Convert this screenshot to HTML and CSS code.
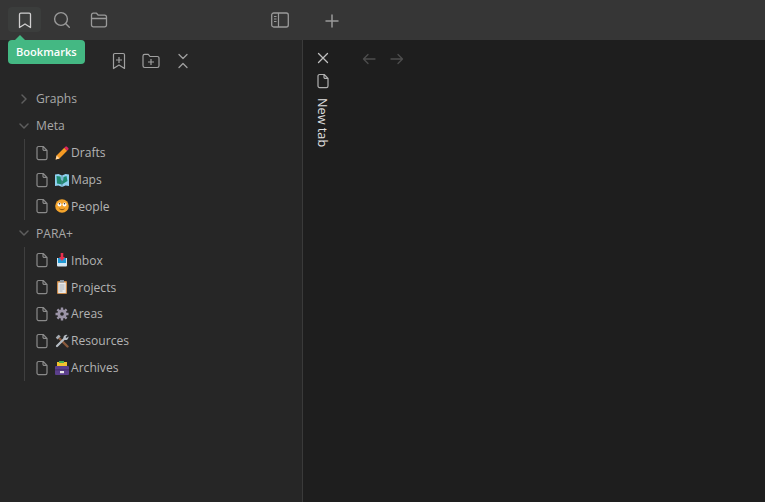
FILE: index.html
```html
<!DOCTYPE html>
<html lang="en">
<head>
<meta charset="utf-8">
<title>Bookmarks</title>
<link rel="stylesheet" href="styles.css">
</head>
<body>
<svg class="defs" width="0" height="0" aria-hidden="true">
  <symbol id="file" viewBox="0 0 14 16"><path d="M3.600 1.500h4.600L12 5.300V13a1.600 1.600 0 0 1-1.600 1.600H3.600A1.600 1.600 0 0 1 2 13V3.100a1.600 1.600 0 0 1 1.600-1.600zM8 1.600v2.600a1.200 1.200 0 0 0 1.200 1.200H12" fill="none" stroke="currentColor" stroke-width="1.200" stroke-linejoin="round"/></symbol>
  <symbol id="down" viewBox="0 0 12 12"><path d="M2 4l4 4 4-4" fill="none" stroke="currentColor" stroke-width="1.500" stroke-linecap="round" stroke-linejoin="round"/></symbol>
  <symbol id="right" viewBox="0 0 12 12"><path d="M4 2l4 4-4 4" fill="none" stroke="currentColor" stroke-width="1.500" stroke-linecap="round" stroke-linejoin="round"/></symbol>
</svg>
<div class="app">
  <header class="titlebar">
    <div class="title-left">
      <div class="tb-btn active"><svg width="18" height="18" viewBox="0 0 18 18"><path d="M3.500 3.500A1.300 1.300 0 0 1 4.800 2.200h8.400a1.300 1.300 0 0 1 1.300 1.300v13L9 13l-5.500 3.500z" fill="none" stroke="currentColor" stroke-width="1.300" stroke-linejoin="round"/></svg></div>
      <div class="tb-btn"><svg width="18" height="18" viewBox="0 0 18 18"><circle cx="8" cy="8" r="6.400" fill="none" stroke="currentColor" stroke-width="1.400"/><path d="M12.800 12.800l3.500 3.500" stroke="currentColor" stroke-width="1.400" stroke-linecap="round"/></svg></div>
      <div class="tb-btn"><svg width="18" height="18" viewBox="0 0 18 18"><path d="M1.500 4A1.800 1.800 0 0 1 3.300 2.200h3.200l1.800 2h6.400a1.800 1.800 0 0 1 1.800 1.800v8a1.800 1.800 0 0 1-1.800 1.800H3.300A1.800 1.800 0 0 1 1.500 14zM1.500 7.500h15" fill="none" stroke="currentColor" stroke-width="1.300" stroke-linejoin="round"/></svg></div>
      <div class="tb-btn layout"><svg width="18" height="16" viewBox="0 0 18 16"><rect x="0.700" y="1" width="16.600" height="14" rx="2" fill="none" stroke="currentColor" stroke-width="1.300"/><path d="M7.500 1v14M3 4.500h2.500M3 7h2.500M3 9.500h2.500" stroke="currentColor" stroke-width="1.200" fill="none"/></svg></div>
    </div>
    <div class="title-right">
      <svg width="14" height="14" viewBox="0 0 14 14"><path d="M7 1v12M1 7h12" stroke="currentColor" stroke-width="1.500" stroke-linecap="round"/></svg>
    </div>
  </header>
  <div class="tooltip">Bookmarks</div>
  <div class="content">
    <aside class="sidebar">
      <div class="sidebar-tools">
        <div class="tool"><svg width="16" height="18" viewBox="0 0 16 18"><path d="M2.500 2.800A1.300 1.300 0 0 1 3.800 1.500h8.400a1.300 1.300 0 0 1 1.300 1.300v13.700L8 13l-5.500 3.500zM8 5v6M5 8h6" fill="none" stroke="currentColor" stroke-width="1.200" stroke-linejoin="round"/></svg></div>
        <div class="tool"><svg width="18" height="16" viewBox="0 0 18 16"><path d="M1 3a1.700 1.700 0 0 1 1.700-1.700h3.600L8 3.500h7.300A1.700 1.700 0 0 1 17 5.200v7.600a1.700 1.700 0 0 1-1.700 1.700H2.700A1.700 1.700 0 0 1 1 12.800zM9 6v6M6 9h6" fill="none" stroke="currentColor" stroke-width="1.200" stroke-linejoin="round"/></svg></div>
        <div class="tool"><svg width="12" height="16" viewBox="0 0 12 16"><path d="M2 1.500L6 5.500l4-4M2 14.500L6 10.500l4 4" fill="none" stroke="currentColor" stroke-width="1.300" stroke-linecap="round" stroke-linejoin="round"/></svg></div>
      </div>
      <nav class="tree">
        <div class="row group"><svg class="chev" width="12" height="12"><use href="#right"/></svg><span>Graphs</span></div>
        <div class="row group"><svg class="chev" width="12" height="12"><use href="#down"/></svg><span>Meta</span></div>
        <div class="children">
          <div class="row item"><svg class="file" width="14" height="16"><use href="#file"/></svg><svg class="emoji" width="14" height="14" viewBox="0 0 14 14"><path d="M.6 13.400l1-3.900L9.300 1.800l2.900 2.900-7.700 7.700z" fill="#f59a23"/><path d="M9.300 1.800l1.100-1.100a1.100 1.100 0 0 1 1.500 0l1.400 1.400a1.100 1.100 0 0 1 0 1.500l-1.100 1.100z" fill="#e0245e"/><path d="M.6 13.400l1-3.900 2.900 2.900z" fill="#ffd9a8"/></svg><span>Drafts</span></div>
          <div class="row item"><svg class="file" width="14" height="16"><use href="#file"/></svg><svg class="emoji" width="14" height="14" viewBox="0 0 14 14"><path d="M0 1.500l3.500-.5L7 2.500 10.500 1l3.500.5V13l-3.500-.5L7 14l-3.500-1.500L0 13z" fill="#8fd0f0"/><path d="M1.500 3l4 .5.500 3.500 2 1 .500-4 3-1 1 5-2.500 1.500-3 2-5-1z" fill="#1f8a70"/><path d="M7 2.500V14" stroke="#5c7f96" stroke-width=".7"/></svg><span>Maps</span></div>
          <div class="row item"><svg class="file" width="14" height="16"><use href="#file"/></svg><svg class="emoji" width="14" height="14" viewBox="0 0 14 14"><circle cx="7" cy="7" r="6.800" fill="#f4a42c"/><circle cx="4.500" cy="5.500" r="2" fill="#fff"/><circle cx="9.500" cy="5.500" r="2" fill="#fff"/><circle cx="4.500" cy="4.800" r=".8" fill="#333"/><circle cx="9.500" cy="4.800" r=".8" fill="#333"/><path d="M4.500 9.800c1.500 1.200 3.500 1.200 5 0" stroke="#7a4a10" stroke-width=".9" fill="none"/></svg><span>People</span></div>
        </div>
        <div class="row group"><svg class="chev" width="12" height="12"><use href="#down"/></svg><span>PARA+</span></div>
        <div class="children">
          <div class="row item"><svg class="file" width="14" height="16"><use href="#file"/></svg><svg class="emoji" width="14" height="14" viewBox="0 0 14 14"><path d="M2 5h10v7.500a1 1 0 0 1-1 1H3a1 1 0 0 1-1-1z" fill="#d4e6f3"/><path d="M3 5h8v5H3z" fill="#1f9ad6"/><path d="M5.700 0h2.600v4H10L7 8 4 4h1.700z" fill="#e8304f"/></svg><span>Inbox</span></div>
          <div class="row item"><svg class="file" width="14" height="16"><use href="#file"/></svg><svg class="emoji" width="14" height="14" viewBox="0 0 14 14"><rect x="2" y="1" width="10" height="13" rx="1" fill="#c98a4a"/><rect x="3.200" y="2.500" width="7.600" height="10.500" fill="#e9e9e9"/><rect x="5" y="0" width="4" height="2.500" fill="#8f98a0"/><path d="M4.500 5h5M4.500 7h5M4.500 9h5M4.500 11h3" stroke="#9aa5ad" stroke-width=".8"/></svg><span>Projects</span></div>
          <div class="row item"><svg class="file" width="14" height="16"><use href="#file"/></svg><svg class="emoji" width="14" height="14" viewBox="0 0 14 14"><path d="M7 .5v13M.5 7h13M2.400 2.400l9.200 9.200M11.600 2.400l-9.200 9.200" stroke="#9a93a6" stroke-width="2.400"/><circle cx="7" cy="7" r="3.300" fill="none" stroke="#9a93a6" stroke-width="2.600"/><circle cx="7" cy="7" r="1.800" fill="#262626"/></svg><span>Areas</span></div>
          <div class="row item"><svg class="file" width="14" height="16"><use href="#file"/></svg><svg class="emoji" width="14" height="14" viewBox="0 0 14 14"><path d="M3.500 3.500l9 9" stroke="#8a5a3c" stroke-width="2.400" stroke-linecap="round"/><path d="M.8 3.500L3.500.8l2.200 1.400-3.300 3.300z" fill="#a4abb3"/><path d="M2 12l7.300-7.300" stroke="#b5bcc4" stroke-width="2.200" stroke-linecap="round"/><path d="M8.500 4.500a3 3 0 0 1 4-3.500l-2 2 1 1 2-1.500a3 3 0 0 1-3.500 3.500z" fill="#b5bcc4"/></svg><span>Resources</span></div>
          <div class="row item"><svg class="file" width="14" height="16"><use href="#file"/></svg><svg class="emoji" width="14" height="14" viewBox="0 0 14 14"><rect x="2" y="1" width="10" height="5" fill="#f3c12e"/><rect x="4" y="0" width="5" height="2" fill="#4caf50"/><rect x="0" y="5" width="14" height="9" rx="1" fill="#5b3f8c"/><rect x="0" y="8.500" width="14" height=".8" fill="#3c2a60"/><rect x="5" y="10" width="4" height="2.200" fill="#e6e6e6"/></svg><span>Archives</span></div>
        </div>
      </nav>
    </aside>
    <main class="main">
      <div class="tabs">
        <svg class="close" width="12" height="12" viewBox="0 0 12 12"><path d="M1.500 1.500l9 9M10.500 1.500l-9 9" stroke="currentColor" stroke-width="1.300" stroke-linecap="round"/></svg>
        <svg class="tab-file" width="14" height="16"><use href="#file"/></svg>
        <span class="tab-title">New tab</span>
      </div>
      <div class="nav-arrows">
        <svg width="14" height="12" viewBox="0 0 14 12"><path d="M13 6H1.500M6 1.500L1.500 6 6 10.500" fill="none" stroke="currentColor" stroke-width="1.300" stroke-linecap="round" stroke-linejoin="round"/></svg>
        <svg width="14" height="12" viewBox="0 0 14 12"><path d="M1 6h11.500M8 1.500L12.500 6 8 10.500" fill="none" stroke="currentColor" stroke-width="1.300" stroke-linecap="round" stroke-linejoin="round"/></svg>
      </div>
    </main>
  </div>
</div>
</body>
</html>
```
FILE: styles.css
```css
* { box-sizing: border-box; }
html, body { margin: 0; height: 100%; overflow: hidden; }
body { background: #1e1e1e; font-family: "Open Sans", "Noto Sans", sans-serif; font-size: 12.100px; color: #b3b3b3; }
.defs { position: absolute; }
.app { position: relative; display: flex; flex-direction: column; height: 502px; }

.titlebar { display: flex; height: 40px; flex: none; background: #363636; color: #9a9a9a; }
.title-left { display: flex; width: 302px; padding: 7px 0 8px 8px; gap: 4px; }
.tb-btn { display: flex; width: 33px; height: 25px; align-items: center; justify-content: center; border-radius: 4px; }
.tb-btn.active { background: #3b3d3c; color: #d0d0d0; }
.tb-btn.layout { margin-left: 144px; }
.title-right { display: flex; align-items: center; padding-left: 23px; padding-top: 2px; }

.tooltip { position: absolute; left: 8px; top: 40px; padding: 0 8px; height: 24px; line-height: 23px; border-radius: 4px; background: #44b883; color: #fff; font-size: 11.100px; font-weight: 600; }
.tooltip::before { content: ""; position: absolute; left: 7px; top: -5px; border-left: 5px solid transparent; border-right: 5px solid transparent; border-bottom: 5px solid #44b883; }

.content { display: flex; flex: 1; min-height: 0; }
.sidebar { width: 303px; flex: none; background: #262626; border-right: 1px solid #3a3a3a; }
.sidebar-tools { display: flex; justify-content: center; padding-top: 8px; height: 45px; color: #a0a0a0; }
.tool { display: flex; width: 32px; height: 26px; align-items: center; justify-content: center; }

.tree { padding: 0.400px 0 0 18px; }
.row { display: flex; align-items: center; height: 26.900px; }
.group span { color: #a8a8a8; }
.chev { margin-right: 6px; color: #5e5e5e; flex: none; }
.children { margin-left: 6px; padding-left: 10px; border-left: 1px solid #3f3f3f; }
.item { color: #b3b3b3; }
.file { flex: none; margin-right: 6px; color: #8a8a8a; }
.emoji { flex: none; margin-right: 2px; }

.main { flex: 1; display: flex; padding: 12px 0 0 14px; background: #1e1e1e; }
.tabs { display: flex; flex-direction: column; align-items: center; width: 12px; color: #c0c0c0; }
.close { flex: none; }
.tab-file { flex: none; margin-top: 9px; color: #b0b0b0; }
.tab-title { writing-mode: vertical-rl; margin-top: 9px; font-size: 12.700px; color: #e0e0e0; line-height: 16px; white-space: nowrap; }
.nav-arrows { display: flex; gap: 14px; margin-left: 33px; padding-top: 1px; height: 14px; color: #4d4d4d; }
```
